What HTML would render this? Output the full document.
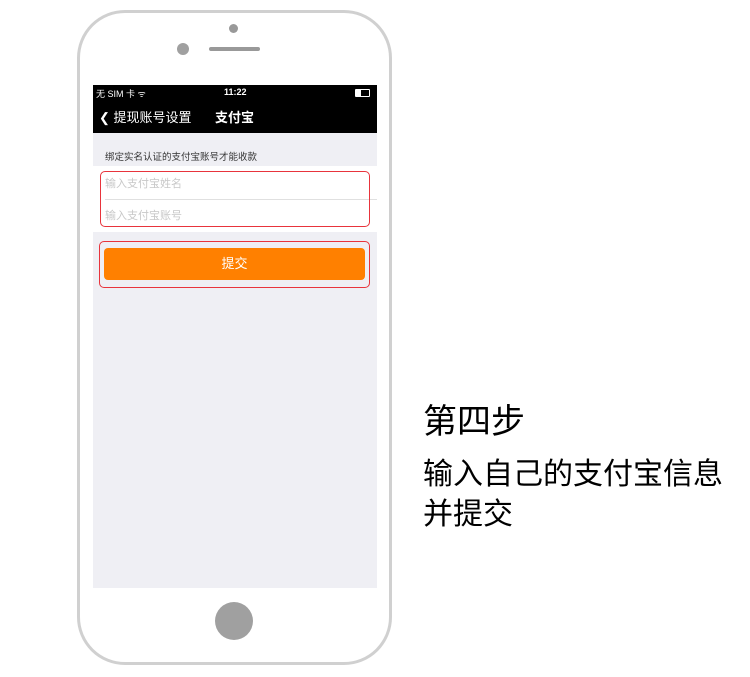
<!DOCTYPE html>
<html><head><meta charset="utf-8"><style>
body{margin:0;width:750px;height:677px;background:#fff;position:relative;overflow:hidden;font-family:"Liberation Sans","Noto Sans CJK SC",sans-serif}
.a{position:absolute}
.phone{left:77px;top:10px;width:309px;height:649px;border:3px solid #d0d0d0;border-radius:48px;background:#fff}
.screen{left:93px;top:85px;width:284px;height:503px;background:#efeff4;overflow:hidden}
.t{position:absolute;white-space:nowrap}
</style></head><body>
<div class="a phone"></div>
<div class="a" style="left:229px;top:24px;width:9px;height:9px;border-radius:50%;background:#999"></div>
<div class="a" style="left:177px;top:43px;width:12px;height:12px;border-radius:50%;background:#a0a0a0"></div>
<div class="a" style="left:209px;top:47px;width:51px;height:4px;border-radius:2px;background:#999"></div>
<div class="a" style="left:215px;top:602px;width:38px;height:38px;border-radius:50%;background:#a0a0a0"></div>
<div class="a screen">
 <div class="a" style="left:0;top:0;width:284px;height:48px;background:#000"></div>
 <div class="t" style="left:3px;top:2px;font-size:9px;color:#fff">无 SIM 卡 ᯤ</div>
 <div class="t" style="left:131px;top:2px;font-size:9px;color:#fff;font-weight:bold">11:22</div>
 <div class="a" style="left:262px;top:4px;width:13px;height:6px;border:1px solid #fff;border-radius:1px"><div style="width:5px;height:6px;background:#fff"></div></div>
 <div class="t" style="left:6px;top:22px;font-size:13px;color:#fff">❮ 提现账号设置</div>
 <div class="t" style="left:122px;top:22px;font-size:13px;color:#fff;font-weight:bold">支付宝</div>
 <div class="t" style="left:12px;top:64px;font-size:9.5px;color:#333">绑定实名认证的支付宝账号才能收款</div>
 <div class="a" style="left:0;top:81px;width:284px;height:66px;background:#fff"></div>
 <div class="a" style="left:12px;top:114px;width:272px;height:1px;background:#e0e0e0"></div>
 <div class="t" style="left:12px;top:90px;font-size:11px;color:#c8c8c8">输入支付宝姓名</div>
 <div class="t" style="left:12px;top:122px;font-size:11px;color:#c8c8c8">输入支付宝账号</div>
 <div class="a" style="left:7px;top:86px;width:270px;height:56px;border:1.5px solid #e8343c;border-radius:5px;box-sizing:border-box"></div>
 <div class="a" style="left:11px;top:163px;width:261px;height:32px;background:#ff8000;border-radius:4px;color:#fff;font-size:13px;text-align:center;line-height:32px">提交</div>
 <div class="a" style="left:6px;top:156px;width:271px;height:47px;border:1.5px solid #e8343c;border-radius:5px;box-sizing:border-box"></div>
</div>
<div class="t" style="left:423px;top:400px;font-size:34px;line-height:44px;color:#000">第四步</div>
<div class="t" style="left:423px;top:455px;font-size:30px;line-height:40px;color:#000">输入自己的支付宝信息<br>并提交</div>
</body></html>
